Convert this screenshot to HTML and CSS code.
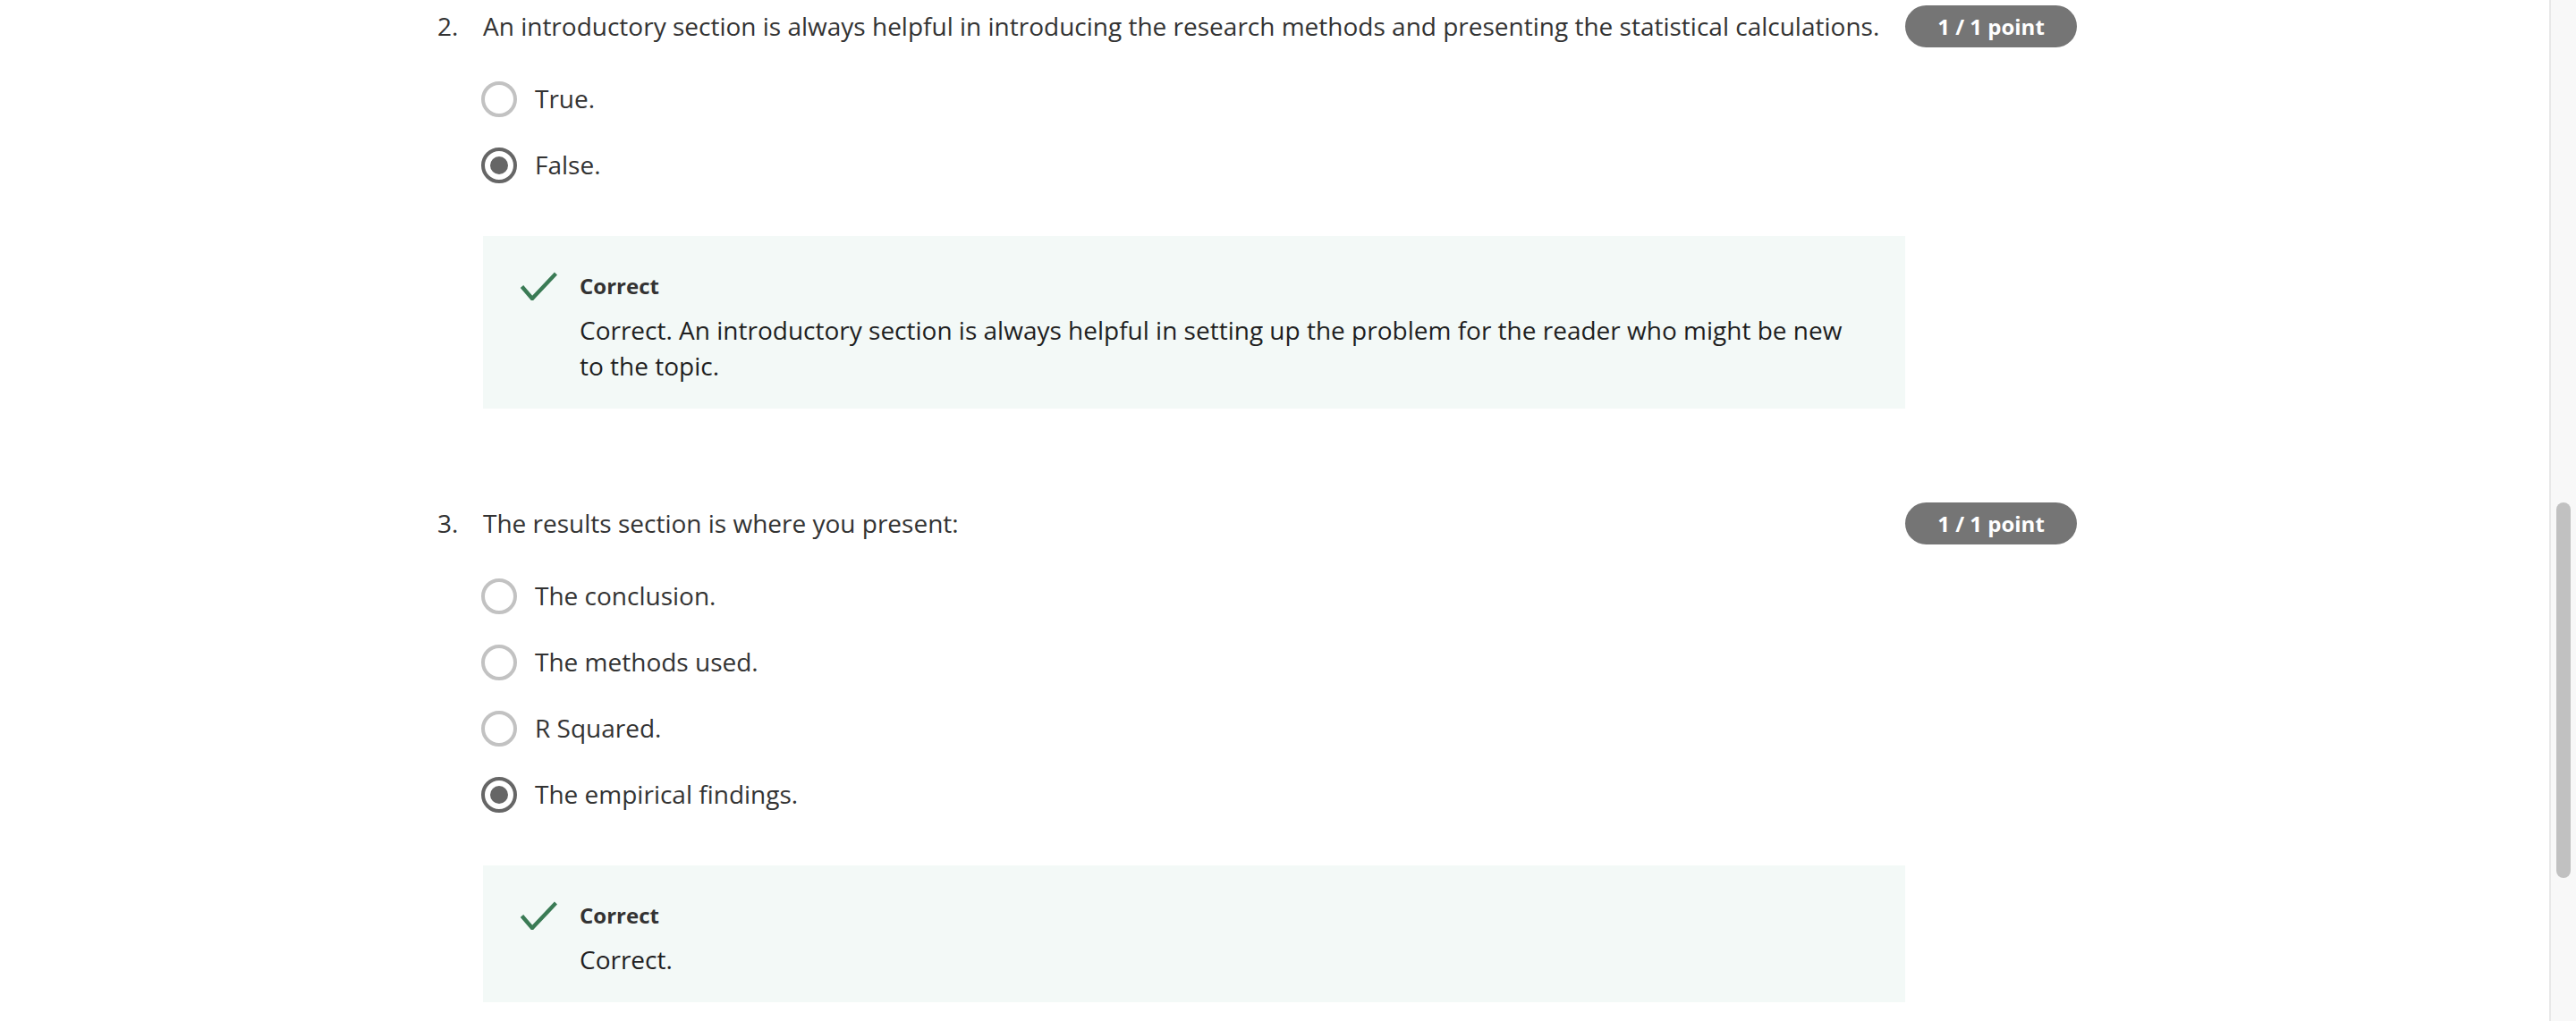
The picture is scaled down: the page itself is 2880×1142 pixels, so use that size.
FILE: index.html
```html
<!DOCTYPE html>
<html lang="en">
<head>
<meta charset="utf-8">
<title>Quiz results</title>
<link rel="stylesheet" href="styles.css">
</head>
<body>
<div class="page">
  <main class="content">
    <section class="question">
      <div class="q-head">
        <span class="q-num">2.</span>
        <p class="q-text">An introductory section is always helpful in introducing the research methods and presenting the statistical calculations.</p>
        <span class="badge">1 / 1 point</span>
      </div>
      <div class="q-body">
        <ul class="options">
          <li class="option"><span class="radio"></span><span class="opt-text">True.</span></li>
          <li class="option"><span class="radio checked"></span><span class="opt-text">False.</span></li>
        </ul>
        <div class="feedback">
          <svg class="check" width="41" height="32" viewBox="0 0 41 32" aria-hidden="true"><path d="M1.5 16.5 L13 30 L39.5 2" fill="none" stroke="#3a7b55" stroke-width="4.4"/></svg>
          <div class="fb-text">
            <div class="fb-title">Correct</div>
            <p class="fb-body">Correct. An introductory section is always helpful in setting up the problem for the reader who might be new to the topic.</p>
          </div>
        </div>
      </div>
    </section>

    <section class="question">
      <div class="q-head">
        <span class="q-num">3.</span>
        <p class="q-text">The results section is where you present:</p>
        <span class="badge">1 / 1 point</span>
      </div>
      <div class="q-body">
        <ul class="options">
          <li class="option"><span class="radio"></span><span class="opt-text">The conclusion.</span></li>
          <li class="option"><span class="radio"></span><span class="opt-text">The methods used.</span></li>
          <li class="option"><span class="radio"></span><span class="opt-text">R Squared.</span></li>
          <li class="option"><span class="radio checked"></span><span class="opt-text">The empirical findings.</span></li>
        </ul>
        <div class="feedback">
          <svg class="check" width="41" height="32" viewBox="0 0 41 32" aria-hidden="true"><path d="M1.5 16.5 L13 30 L39.5 2" fill="none" stroke="#3a7b55" stroke-width="4.4"/></svg>
          <div class="fb-text">
            <div class="fb-title">Correct</div>
            <p class="fb-body">Correct.</p>
          </div>
        </div>
      </div>
    </section>
  </main>
  <div class="scrollbar"><div class="thumb"></div></div>
</div>
</body>
</html>
```

FILE: styles.css
```css
* { box-sizing: border-box; }

html, body {
  margin: 0;
  padding: 0;
  height: 100%;
  overflow: hidden;
  background: #ffffff;
}

body {
  font-family: "Open Sans", "Liberation Sans", sans-serif;
  color: #333333;
}

.page {
  display: flex;
  height: 1142px;
}

.content {
  flex: 1;
  padding: 6px 0 0 489px;
}

.question + .question {
  margin-top: 105px;
}

.q-head {
  display: flex;
  align-items: center;
  width: 1833px;
  height: 47px;
}

.q-num {
  width: 51px;
  flex: none;
  font-size: 28px;
  line-height: 36px;
  margin-top: -2px;
}

.q-text {
  flex: 1;
  margin: -2px 0 0;
  font-size: 28px;
  line-height: 36px;
  color: #333333;
}

.badge {
  flex: none;
  width: 192px;
  height: 47px;
  border-radius: 24px;
  background: #757575;
  color: #ffffff;
  font-weight: 700;
  font-size: 24px;
  display: flex;
  align-items: center;
  justify-content: center;
}

.q-body {
  margin-left: 51px;
  width: 1590px;
}

.options {
  list-style: none;
  margin: 21px 0 0;
  padding: 0;
}

.option {
  height: 74px;
  display: flex;
  align-items: center;
  gap: 20px;
  margin-left: -2px;
}

.radio {
  width: 40px;
  height: 40px;
  border-radius: 50%;
  border: 4px solid #c2c2c2;
  background: #ffffff;
  display: flex;
  align-items: center;
  justify-content: center;
  flex: none;
}

.radio.checked {
  border: 4px solid #666666;
}

.radio.checked::after {
  content: "";
  width: 20px;
  height: 20px;
  border-radius: 50%;
  background: #666666;
}

.opt-text {
  font-size: 28px;
  line-height: 36px;
  color: #333333;
  margin-top: -2px;
}

.feedback {
  margin-top: 42px;
  background: #f3f9f7;
  display: flex;
  align-items: flex-start;
  gap: 25px;
  padding: 41px 60px 28px 42px;
}

.check {
  flex: none;
  margin-top: -1px;
}

.fb-text {
  flex: 1;
}

.fb-title {
  font-size: 24px;
  font-weight: 700;
  line-height: 30px;
  color: #333333;
}

.fb-body {
  margin: 14px 0 0;
  font-size: 28px;
  line-height: 40px;
  color: #1f1f1f;
}

.scrollbar {
  width: 30px;
  flex: none;
  background: #f8f8f8;
  border-left: 2px solid #e8e8e8;
  padding: 562px 0 0 6px;
}

.thumb {
  width: 16px;
  height: 420px;
  border-radius: 8px;
  background: #c1c1c1;
}
```
